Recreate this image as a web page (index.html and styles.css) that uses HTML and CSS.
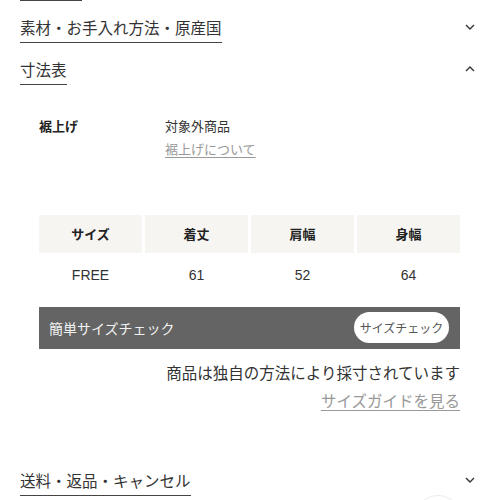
FILE: index.html
```
<!DOCTYPE html>
<html lang="ja">
<head>
<meta charset="utf-8">
<link rel="stylesheet" href="styles.css">
</head>
<body>
<div class="page">
  <div class="topline"></div>
  <div class="acc-head">
    <span class="acc-title">素材・お手入れ方法・原産国</span>
    <svg class="chev" width="10" height="6" viewBox="0 0 10 6"><path d="M1 1 L5 5 L9 1" fill="none" stroke="#333" stroke-width="1.4"/></svg>
  </div>
  <div class="acc-head">
    <span class="acc-title">寸法表</span>
    <svg class="chev" width="10" height="6" viewBox="0 0 10 6"><path d="M1 5 L5 1 L9 5" fill="none" stroke="#333" stroke-width="1.4"/></svg>
  </div>
  <div class="acc-body">
    <div class="hem">
      <div class="hem-label">裾上げ</div>
      <div class="hem-value">
        <div>対象外商品</div>
        <a class="link small">裾上げについて</a>
      </div>
    </div>
    <div class="size-table">
      <div class="th">サイズ</div>
      <div class="th">着丈</div>
      <div class="th">肩幅</div>
      <div class="th">身幅</div>
      <div class="td">FREE</div>
      <div class="td">61</div>
      <div class="td">52</div>
      <div class="td">64</div>
    </div>
    <div class="check-bar">
      <span class="check-title">簡単サイズチェック</span>
      <span class="check-btn">サイズチェック</span>
    </div>
    <div class="note">商品は独自の方法により採寸されています</div>
    <div class="guide"><a class="link">サイズガイドを見る</a></div>
  </div>
  <div class="acc-head last">
    <span class="acc-title">送料・返品・キャンセル</span>
    <svg class="chev" width="10" height="6" viewBox="0 0 10 6"><path d="M1 1 L5 5 L9 1" fill="none" stroke="#333" stroke-width="1.4"/></svg>
  </div>
</div>
<div class="float-circle"></div>
</body>
</html>
```
FILE: styles.css
```
html, body {
  margin: 0;
  padding: 0;
  background: #fff;
}
html {
  height: 500px;
  overflow: hidden;
}
body {
  font-family: "Noto Sans CJK JP", "Noto Sans", sans-serif;
  color: #333;
  width: 500px;
  height: 500px;
  overflow: hidden;
  position: relative;
}
.page {
  padding: 0 20px;
}
.topline {
  width: 62px;
  height: 0;
  border-top: 1.5px solid #444;
}
.acc-head {
  display: flex;
  justify-content: space-between;
  align-items: flex-start;
}
.acc-title {
  display: inline-block;
  font-size: 15.5px;
  line-height: 24px;
  padding-top: 14px;
  padding-bottom: 3px;
  border-bottom: 1.5px solid #444;
}
.chev {
  margin-top: 23px;
  margin-right: 5px;
}
.acc-body {
  padding: 28.5px 20px 0 19px;
}
.hem {
  display: flex;
  font-size: 13px;
  line-height: 23px;
}
.hem-label {
  width: 126px;
  font-weight: bold;
  color: #222;
}
.link {
  color: #999;
  text-decoration: underline;
  text-underline-offset: 3px;
}
.small {
  font-size: 13px;
}
.size-table {
  margin-top: 55px;
  display: grid;
  grid-template-columns: repeat(4, 1fr);
  column-gap: 3px;
  row-gap: 3px;
  font-size: 13px;
}
.th {
  background: #f7f5f2;
  height: 38px;
  display: flex;
  align-items: center;
  justify-content: center;
  font-weight: bold;
  color: #222;
}
.td {
  height: 38px;
  display: flex;
  align-items: center;
  justify-content: center;
  font-family: "Liberation Sans", "Noto Sans CJK JP", sans-serif;
  font-size: 14px;
}
.check-bar {
  margin-top: 13px;
  height: 42px;
  background: #646464;
  display: flex;
  align-items: center;
  justify-content: space-between;
  padding: 0 11px 0 10px;
}
.check-title {
  color: #f2f2f2;
  font-size: 14px;
}
.check-btn {
  background: #fff;
  color: #555;
  font-size: 12px;
  width: 95px;
  height: 31px;
  border-radius: 16px;
  display: flex;
  align-items: center;
  justify-content: center;
}
.note {
  margin-top: 11px;
  text-align: right;
  font-size: 15.5px;
  line-height: 24px;
}
.guide {
  margin-top: 4px;
  text-align: right;
  font-size: 15.5px;
  line-height: 24px;
}
.last {
  margin-top: 42px;
}
.float-circle {
  position: absolute;
  left: 414px;
  top: 495px;
  width: 46px;
  height: 46px;
  border-radius: 50%;
  border: 1px solid #ececec;
  background: #fff;
}
```
